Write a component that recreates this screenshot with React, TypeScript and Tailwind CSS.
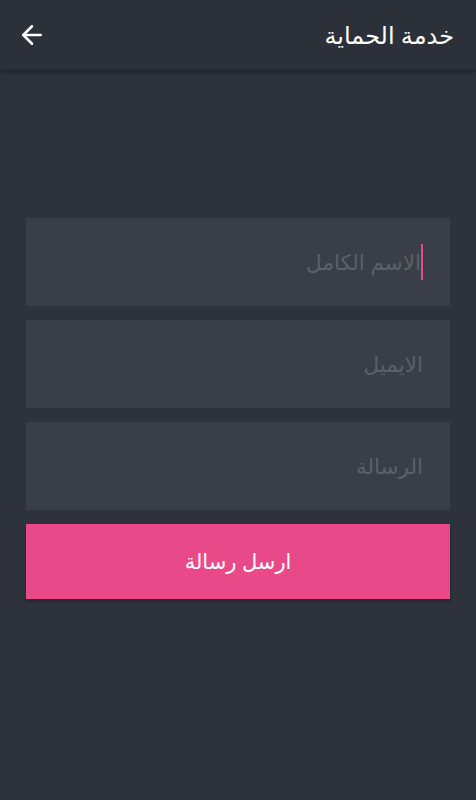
import { ArrowLeft } from 'lucide-react';

const fields = ['الاسم الكامل', 'الايميل', 'الرسالة'];

export default function App() {
  return (
    <div
      className="min-h-[800px] w-full bg-[#2e323a] text-white"
      style={{ fontFamily: '"Noto Sans", "DejaVu Sans", sans-serif' }}
    >
      {/* Header */}
      <header className="relative z-10 flex h-[70px] items-center justify-between bg-[#2c3038] pl-[17px] pr-[22px] shadow-[0_2px_4px_rgba(0,0,0,0.35)]">
        <ArrowLeft className="h-[30px] w-[30px] text-white" strokeWidth={2} />
        <h1 dir="rtl" className="text-[24px] text-white">خدمة الحماية</h1>
      </header>

      {/* Form */}
      <div className="flex flex-col gap-[14px] px-[26px] pt-[148px]">
        {fields.map((label, i) => (
          <div
            key={label}
            dir="rtl"
            className="flex h-[88px] items-center bg-[#3a3e47] pr-[27px]"
          >
            {i === 0 && <span className="h-9 w-[2px] bg-[#e84a89]" />}
            <span className="text-[21.5px] text-[#5c6069]">{label}</span>
          </div>
        ))}
        <button
          dir="rtl"
          className="h-[75px] bg-[#e84a89] text-[21px] text-white shadow-[0_2px_3px_rgba(0,0,0,0.3)]"
        >
          ارسل رسالة
        </button>
      </div>
    </div>
  );
}
